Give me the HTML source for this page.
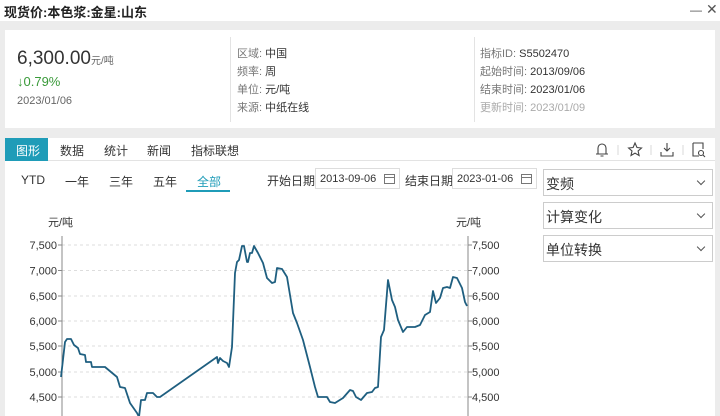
<!DOCTYPE html>
<html><head><meta charset="utf-8"><style>
*{margin:0;padding:0;box-sizing:border-box}
body{width:720px;height:416px;overflow:hidden;background:#ececec;font-family:"Liberation Sans","Noto Sans CJK SC",sans-serif;color:#333;position:relative}
.a{position:absolute;white-space:nowrap}
.top{position:absolute;left:0;top:0;width:720px;height:21px;background:#fff}
.card{position:absolute;left:5px;top:30px;width:710px;height:98px;background:#fff}
.panel{position:absolute;left:5px;top:138px;width:710px;height:278px;background:#fff}
.k{color:#777}
.dd{position:absolute;left:543px;width:170px;height:27px;border:1px solid #ccc;background:#fff;font-size:14px;padding:4px 0 0 2px}
.dd::after{content:"";position:absolute;right:8px;top:8px;width:5px;height:5px;border-right:1px solid #555;border-bottom:1px solid #555;transform:rotate(45deg)}
.inp{position:absolute;top:168px;height:21px;border:1px solid #ddd;font-size:11px;padding:4px 0 0 4px;color:#333}
</style></head><body>
<div class="top"></div>
<div class="a" style="left:4px;top:2px;font-size:13px;font-weight:bold;color:#222">现货价:本色浆:金星:山东</div>
<div class="a" style="left:690px;top:3px;font-size:12px;color:#555">—</div>
<div class="a" style="left:706px;top:1px;font-size:14px;color:#555">✕</div>
<div class="card"></div>
<div class="a" style="left:17px;top:48px;font-size:19px;color:#333">6,300.00<span style="font-size:10px;color:#666">元/吨</span></div>
<div class="a" style="left:17px;top:74px;font-size:13px;color:#3a9a3a">↓0.79%</div>
<div class="a" style="left:17px;top:95px;font-size:11px;color:#666">2023/01/06</div>
<div class="a" style="left:230px;top:37px;width:1px;height:85px;background:#e3e3e3"></div>
<div class="a" style="left:474px;top:37px;width:1px;height:85px;background:#e3e3e3"></div>
<div class="a" style="left:237px;top:45px;font-size:11px;line-height:18px"><span class="k">区域:</span> 中国<br><span class="k">频率:</span> 周<br><span class="k">单位:</span> 元/吨<br><span class="k">来源:</span> 中纸在线</div>
<div class="a" style="left:480px;top:45px;font-size:11px;line-height:18px"><span class="k">指标ID:</span> S5502470<br><span class="k">起始时间:</span> 2013/09/06<br><span class="k">结束时间:</span> 2023/01/06<br><span style="color:#aaa">更新时间: 2023/01/09</span></div>
<div class="panel"></div>
<div class="a" style="left:5px;top:160px;width:710px;height:1px;background:#e3e3e3"></div>
<div class="a" style="left:5px;top:138px;width:43px;height:23px;background:#1f9cb8;color:#fff;font-size:12px;padding:4px 0 0 11px">图形</div>
<div class="a" style="left:60px;top:142px;font-size:12px">数据</div>
<div class="a" style="left:104px;top:142px;font-size:12px">统计</div>
<div class="a" style="left:147px;top:142px;font-size:12px">新闻</div>
<div class="a" style="left:191px;top:142px;font-size:12px">指标联想</div>
<svg class="a" style="left:590px;top:140px" width="125" height="20" fill="none" stroke="#444" stroke-width="1.1">
<path d="M8 14V8a4 4 0 0 1 8 0v6h2H6zM10.5 16h3"/>
<path d="M28 5v10M61 5v10M93 5v10" stroke="#ddd"/>
<path d="M45 3l2 4.5 4.5.5-3.4 3 1 4.5-4.1-2.4-4 2.4 1-4.5-3.4-3 4.5-.5z"/>
<path d="M77 3v8M74 8l3 3 3-3M71 12v4h12v-4"/>
<path d="M103 3h10v6M103 3v13h6"/><circle cx="111" cy="13" r="2.5"/><path d="M113 15l2 2"/>
</svg>
<div class="a" style="left:21px;top:173px;font-size:12px">YTD</div>
<div class="a" style="left:65px;top:173px;font-size:12px">一年</div>
<div class="a" style="left:109px;top:173px;font-size:12px">三年</div>
<div class="a" style="left:153px;top:173px;font-size:12px">五年</div>
<div class="a" style="left:197px;top:173px;font-size:12px;color:#1f9cb8">全部</div>
<div class="a" style="left:186px;top:190px;width:44px;height:2px;background:#1f9cb8"></div>
<div class="a" style="left:267px;top:172px;font-size:12px">开始日期</div>
<div class="inp" style="left:315px;width:85px">2013-09-06</div>
<div class="a" style="left:405px;top:172px;font-size:12px">结束日期</div>
<div class="inp" style="left:452px;width:85px">2023-01-06</div>
<svg class="a" style="left:383px;top:172px" width="150" height="14" fill="none" stroke="#777"><rect x="1.5" y="2.5" width="10" height="9"/><path d="M1.5 5.5h10"/><rect x="138.5" y="2.5" width="10" height="9"/><path d="M138.5 5.5h10"/></svg>
<div class="dd" style="top:169px">变频</div>
<div class="dd" style="top:202px">计算变化</div>
<div class="dd" style="top:235px">单位转换</div>
<div class="a" style="left:48px;top:214px;font-size:11px">元/吨</div>
<div class="a" style="left:456px;top:214px;font-size:11px">元/吨</div>
<svg class="a" style="left:0;top:0" width="540" height="416" font-size="11" fill="#333" font-family="Liberation Sans,sans-serif">
<g stroke="#ddd" stroke-dasharray="3,3"><path d="M62 245H468M62 270.5H468M62 296H468M62 321H468M62 346H468M62 372H468M62 397H468"/></g>
<path d="M62 236V416M468 236V416" stroke="#888"/>
<g stroke="#888"><path d="M58 245h4M58 270.5h4M58 296h4M58 321h4M58 346h4M58 372h4M58 397h4M468 245h4M468 270.5h4M468 296h4M468 321h4M468 346h4M468 372h4M468 397h4"/></g>
<g text-anchor="end"><text x="57" y="249">7,500</text><text x="57" y="274.5">7,000</text><text x="57" y="300">6,500</text><text x="57" y="325">6,000</text><text x="57" y="350">5,500</text><text x="57" y="376">5,000</text><text x="57" y="401">4,500</text></g>
<g><text x="472" y="249">7,500</text><text x="472" y="274.5">7,000</text><text x="472" y="300">6,500</text><text x="472" y="325">6,000</text><text x="472" y="350">5,500</text><text x="472" y="376">5,000</text><text x="472" y="401">4,500</text></g>
<polyline fill="none" stroke="#1f5f80" stroke-width="1.8" stroke-linejoin="round" points="61,377 65,342 67,339 71,339 74,345 78,348 80,354 85,355 86,362 91,362 92,367 105,367 117,377 120,387 125,388 130,403 137,413 139,417 141,400 145,400 147,393 153,393 157,397 160,397 217,357 218,363 220,358 223,361 227,363 229,367 232,347 235,273 237,262 239,260 242,246 244,246 247,262 248,262 250,253 252,253 254,246 258,253 263,263 267,278 272,283 275,282 277,268 282,269 287,277 293,313 297,323 303,340 310,367 315,387 318,397 327,397 330,402 335,403 343,398 350,390 353,391 356,397 361,400 367,393 372,392 375,388 378,387 381,337 384,330 388,280 392,300 395,307 398,320 403,332 407,327 415,327 420,325 425,315 430,312 433,291 436,303 440,298 443,288 447,287 450,288 453,277 457,278 462,288 465,302 467,306"/>
</svg>
</body></html>
